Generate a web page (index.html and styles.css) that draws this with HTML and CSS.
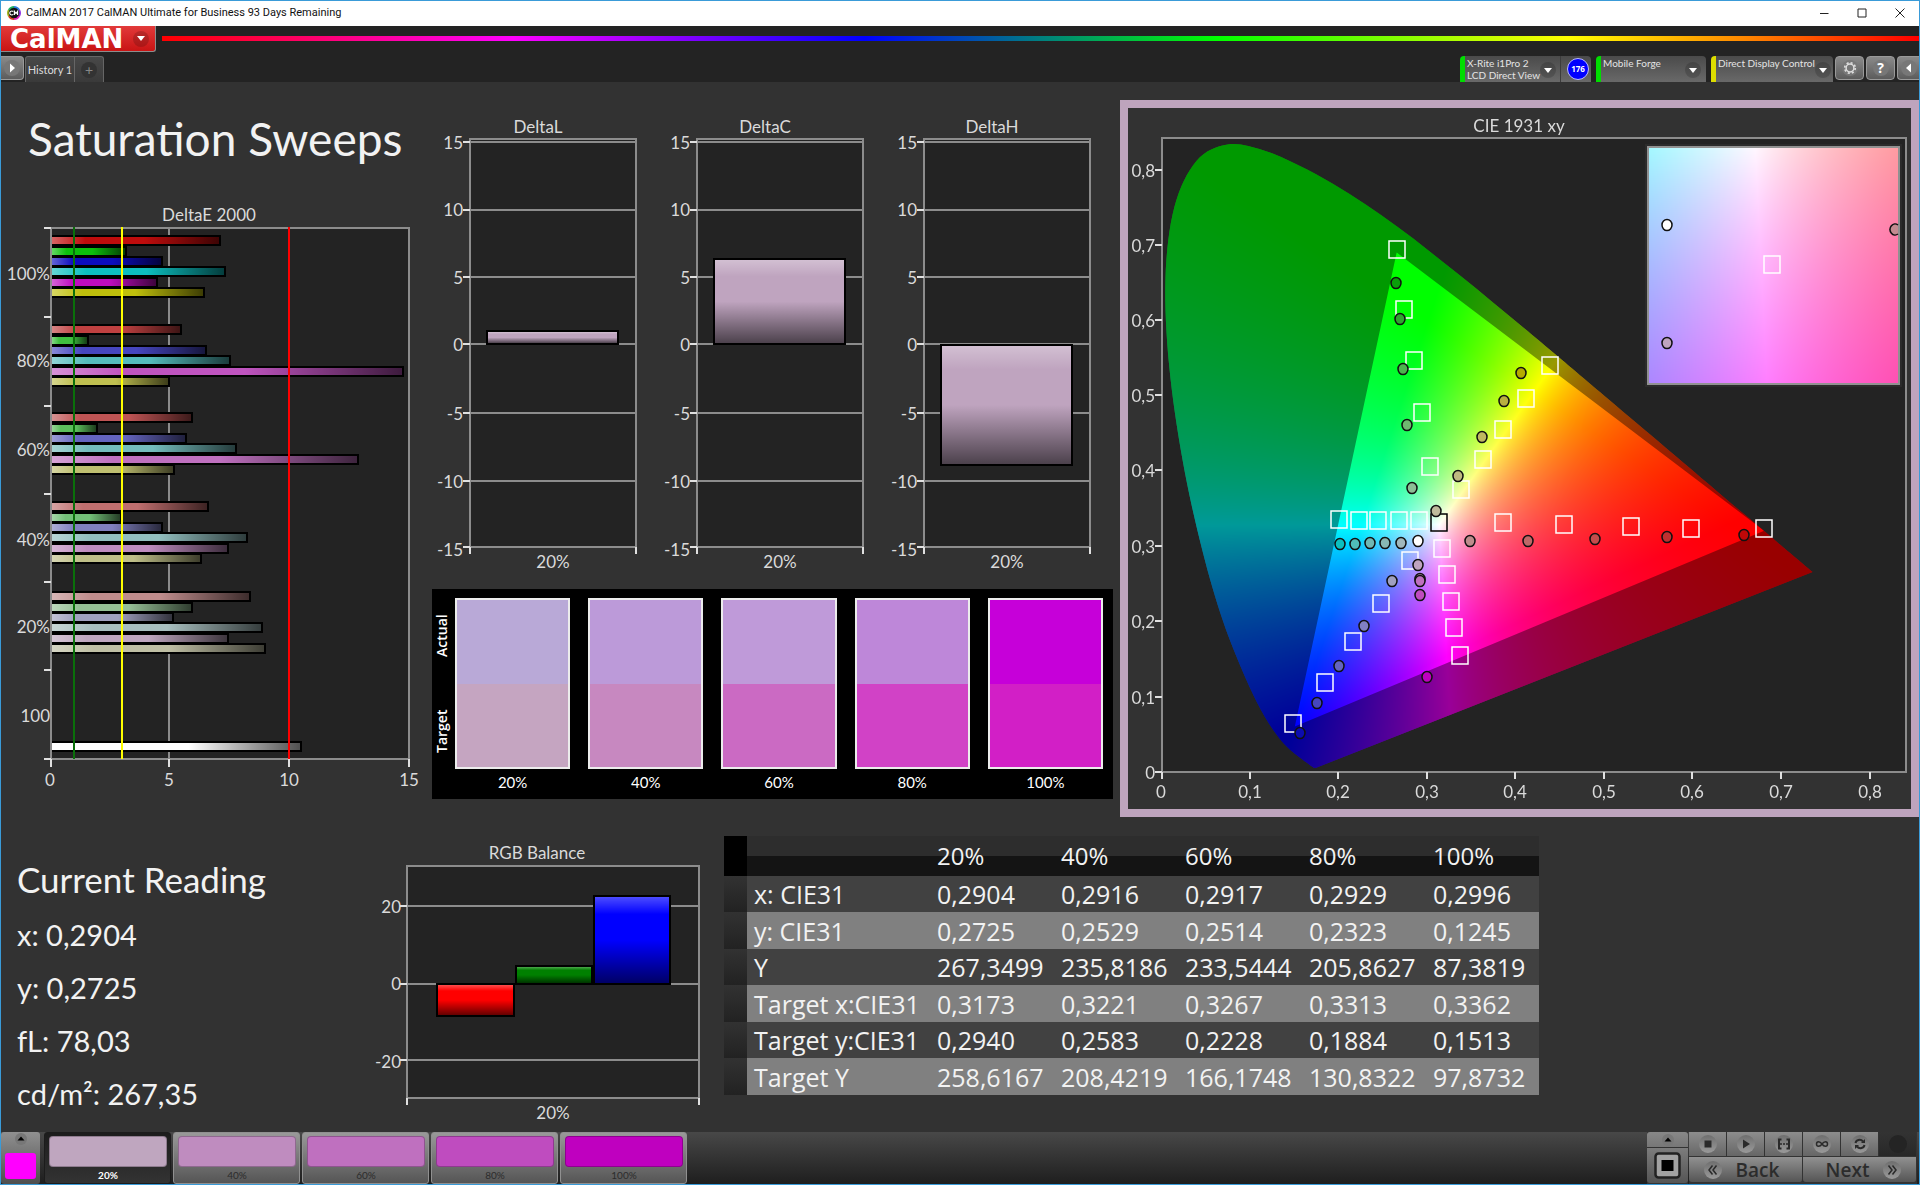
FILE: index.html
```html
<!DOCTYPE html>
<html lang="en">
<head>
<meta charset="utf-8">
<meta name="viewport" content="width=device-width, initial-scale=1">
<title>CalMAN 2017 CalMAN Ultimate for Business</title>
<link rel="stylesheet" href="styles.css">
</head>
<body>
<svg class="defs" width="0" height="0" aria-hidden="true">
  <defs>
    <linearGradient id="shade-x" x1="0" x2="1" y1="0" y2="0">
      <stop offset="0" stop-color="#fff" stop-opacity=".36"/>
      <stop offset=".2" stop-color="#fff" stop-opacity="0"/>
      <stop offset=".55" stop-color="#000" stop-opacity="0"/>
      <stop offset="1" stop-color="#000" stop-opacity=".68"/>
    </linearGradient>
    <linearGradient id="shade-y" x1="0" x2="0" y1="0" y2="1">
      <stop offset="0" stop-color="#fff" stop-opacity=".3"/>
      <stop offset=".2" stop-color="#fff" stop-opacity="0"/>
      <stop offset=".5" stop-color="#000" stop-opacity="0"/>
      <stop offset="1" stop-color="#000" stop-opacity=".6"/>
    </linearGradient>
  </defs>
</svg>

<header class="titlebar">
  <svg class="app-icon" viewBox="0 0 14 14" aria-hidden="true">
    <circle cx="7" cy="7" r="6" fill="#111"/>
    <g fill="none" stroke-width="1.6">
      <path d="M7 .9A6.1 6.1 0 0 1 12.3 4" stroke="#2b7de0"/>
      <path d="M12.3 4A6.1 6.1 0 0 1 12.3 10" stroke="#8a2be2"/>
      <path d="M12.3 10A6.1 6.1 0 0 1 7 13.1" stroke="#e020c0"/>
      <path d="M7 13.1A6.1 6.1 0 0 1 1.7 10" stroke="#d04020"/>
      <path d="M1.7 10A6.1 6.1 0 0 1 1.7 4" stroke="#a0b010"/>
      <path d="M1.7 4A6.1 6.1 0 0 1 7 .9" stroke="#20b060"/>
    </g>
    <path d="M6.2 5.6A2 2 0 1 0 6.2 8.4M7.4 9V5.4L9 7.6L10.6 5.4V9" fill="none" stroke="#fff" stroke-width="1.2"/>
  </svg>
  <span class="window-title">CalMAN 2017 CalMAN Ultimate for Business 93 Days Remaining</span>
  <div class="window-buttons">
    <button type="button" aria-label="Minimize"><svg viewBox="0 0 10 10"><path d="M1 5.5H9.5"/></svg></button>
    <button type="button" aria-label="Maximize"><svg viewBox="0 0 10 10"><path d="M1 1H9V9H1Z"/></svg></button>
    <button type="button" aria-label="Close"><svg viewBox="0 0 10 10"><path d="M.5 .5L9.5 9.5M9.5 .5L.5 9.5"/></svg></button>
  </div>
</header>

<div class="brandbar">
  <button type="button" class="logo">CalMAN<span class="caret"></span></button>
  <div class="spectrum"></div>
</div>

<nav class="toolbar">
  <button type="button" class="square-button first" aria-label="Expand"><span class="disc"><svg viewBox="0 0 16 16"><path d="M6 3.500L11 8L6 12.500Z"/></svg></span></button>
  <div class="tabs">
    <button type="button" class="tab">History 1</button>
    <button type="button" class="tab add" aria-label="Add history"><span>+</span></button>
  </div>
  <div class="devices">
    <div class="device meter">
      <button type="button" class="device-menu">X-Rite i1Pro 2<br>LCD Direct View<span class="caret"></span></button>
      <span class="badge">176</span>
    </div>
    <button type="button" class="device device-menu source">Mobile Forge<span class="caret"></span></button>
    <button type="button" class="device device-menu display">Direct Display Control<span class="caret"></span></button>
    <button type="button" class="square-button" aria-label="Settings"><span class="disc"><svg viewBox="0 0 16 16"><circle cx="8" cy="8" r="3.900" fill="none" stroke="#ddd" stroke-width="1.500"/><circle cx="8" cy="8" r="5.300" fill="none" stroke="#ddd" stroke-width="1.600" stroke-dasharray="2.080 2.080"/></svg></span></button>
    <button type="button" class="square-button help" aria-label="Help"><span class="disc">?</span></button>
    <button type="button" class="square-button last" aria-label="Collapse"><span class="disc"><svg viewBox="0 0 16 16"><path d="M10 3.500L5 8L10 12.500Z"/></svg></span></button>
  </div>
</nav>

<main>
  <section class="upper">
    <div class="sweeps">
      <h1>Saturation Sweeps</h1>
      <svg class="chart" viewBox="1 200 431 600" role="img" aria-label="DeltaE 2000">
        <text class="label" x="209" y="221" text-anchor="middle">DeltaE 2000</text>
        <rect class="plot" x="51" y="228" width="358" height="531"/>
        <path class="grid" d="M169 228V759M289 228V759"/>
        <g id="delta-e-bars"></g>
        <path class="frame" d="M51 228H409V759H51Z"/>
        <path class="tick" d="M44 228H51M44 317H51M44 406H51M44 494H51M44 582H51M44 670H51M44 759H51M51 759V767M169 759V767M289 759V767M409 759V767"/>
        <path d="M74 227V759" stroke="#0a700a" stroke-width="2"/>
        <path d="M122 227V759" stroke="#ff0" stroke-width="2"/>
        <path d="M289 227V759" stroke="#f00" stroke-width="2"/>
        <g class="label" text-anchor="end">
          <text x="50" y="280">100%</text><text x="50" y="367">80%</text><text x="50" y="456">60%</text>
          <text x="50" y="546">40%</text><text x="50" y="633">20%</text><text x="50" y="722">100</text>
        </g>
        <g class="label" text-anchor="middle">
          <text x="50" y="786">0</text><text x="169" y="786">5</text><text x="289" y="786">10</text><text x="409" y="786">15</text>
        </g>
      </svg>
    </div>

    <div class="deltas">
      <div class="delta-charts">
        <svg class="chart" viewBox="0 110 227 470" role="img" aria-label="DeltaL">
          <text class="label" x="106" y="133" text-anchor="middle">DeltaL</text>
          <rect class="plot" x="38" y="139" width="166" height="408"/>
          <path class="grid" d="M38 142H204M38 210H204M38 277H204M38 344H204M38 413H204M38 481H204"/>
          <path class="frame" d="M38 139H204V547H38Z"/>
          <path class="tick" d="M31 142H38M31 210H38M31 277H38M31 344H38M31 413H38M31 481H38M31 547H38M38 547V554M204 547V554"/>
          <rect class="bar" x="55" y="331" width="131" height="13" fill="#bfa4bf"/>
          <rect x="56" y="332" width="129" height="11" fill="url(#shade-y)"/>
          <g class="label" text-anchor="end">
            <text x="31" y="149">15</text><text x="31" y="216">10</text><text x="31" y="284">5</text><text x="31" y="351">0</text>
            <text x="31" y="420">-5</text><text x="31" y="488">-10</text><text x="31" y="556">-15</text>
          </g>
          <text class="label" x="121" y="568" text-anchor="middle">20%</text>
        </svg>
        <svg class="chart" viewBox="0 110 227 470" role="img" aria-label="DeltaC">
          <text class="label" x="106" y="133" text-anchor="middle">DeltaC</text>
          <rect class="plot" x="38" y="139" width="166" height="408"/>
          <path class="grid" d="M38 142H204M38 210H204M38 277H204M38 344H204M38 413H204M38 481H204"/>
          <path class="frame" d="M38 139H204V547H38Z"/>
          <path class="tick" d="M31 142H38M31 210H38M31 277H38M31 344H38M31 413H38M31 481H38M31 547H38M38 547V554M204 547V554"/>
          <rect class="bar" x="55" y="259" width="131" height="85" fill="#bfa4bf"/>
          <rect x="56" y="260" width="129" height="83" fill="url(#shade-y)"/>
          <g class="label" text-anchor="end">
            <text x="31" y="149">15</text><text x="31" y="216">10</text><text x="31" y="284">5</text><text x="31" y="351">0</text>
            <text x="31" y="420">-5</text><text x="31" y="488">-10</text><text x="31" y="556">-15</text>
          </g>
          <text class="label" x="121" y="568" text-anchor="middle">20%</text>
        </svg>
        <svg class="chart" viewBox="0 110 227 470" role="img" aria-label="DeltaH">
          <text class="label" x="106" y="133" text-anchor="middle">DeltaH</text>
          <rect class="plot" x="38" y="139" width="166" height="408"/>
          <path class="grid" d="M38 142H204M38 210H204M38 277H204M38 344H204M38 413H204M38 481H204"/>
          <path class="frame" d="M38 139H204V547H38Z"/>
          <path class="tick" d="M31 142H38M31 210H38M31 277H38M31 344H38M31 413H38M31 481H38M31 547H38M38 547V554M204 547V554"/>
          <rect class="bar" x="55" y="345" width="131" height="120" fill="#bfa4bf"/>
          <rect x="56" y="346" width="129" height="118" fill="url(#shade-y)"/>
          <g class="label" text-anchor="end">
            <text x="31" y="149">15</text><text x="31" y="216">10</text><text x="31" y="284">5</text><text x="31" y="351">0</text>
            <text x="31" y="420">-5</text><text x="31" y="488">-10</text><text x="31" y="556">-15</text>
          </g>
          <text class="label" x="121" y="568" text-anchor="middle">20%</text>
        </svg>
      </div>
      <div class="compare">
        <div class="compare-side"><span>Actual</span><span>Target</span></div>
        <div class="pair p20"><div class="chip"><i></i><b></b></div>20%</div>
        <div class="pair p40"><div class="chip"><i></i><b></b></div>40%</div>
        <div class="pair p60"><div class="chip"><i></i><b></b></div>60%</div>
        <div class="pair p80"><div class="chip"><i></i><b></b></div>80%</div>
        <div class="pair p100"><div class="chip"><i></i><b></b></div>100%</div>
      </div>
    </div>

    <div class="cie">
      <canvas id="cie-canvas" width="783" height="701"></canvas>
      <svg class="chart" viewBox="1128 108 783 701" role="img" aria-label="CIE 1931 xy">
        <text class="label" x="1519" y="132" text-anchor="middle">CIE 1931 xy</text>
        <path class="frame" d="M1162 138H1906V772H1162Z"/>
        <rect x="1648" y="147" width="251" height="237" fill="none" stroke="#919191" stroke-width="2"/>
        <path class="tick" d="M1155 170H1162M1155 245H1162M1155 320H1162M1155 395H1162M1155 470H1162M1155 546H1162M1155 621H1162M1155 697H1162M1155 772H1162M1162 772V779M1250 772V779M1338 772V779M1427 772V779M1515 772V779M1604 772V779M1692 772V779M1781 772V779M1870 772V779"/>
        <g class="label" text-anchor="end">
          <text x="1155" y="177">0,8</text><text x="1155" y="252">0,7</text><text x="1155" y="327">0,6</text><text x="1155" y="402">0,5</text>
          <text x="1155" y="477">0,4</text><text x="1155" y="553">0,3</text><text x="1155" y="628">0,2</text><text x="1155" y="704">0,1</text><text x="1155" y="779">0</text>
        </g>
        <g class="label" text-anchor="middle">
          <text x="1161" y="798">0</text><text x="1250" y="798">0,1</text><text x="1338" y="798">0,2</text><text x="1427" y="798">0,3</text>
          <text x="1515" y="798">0,4</text><text x="1604" y="798">0,5</text><text x="1692" y="798">0,6</text><text x="1781" y="798">0,7</text><text x="1870" y="798">0,8</text>
        </g>
        <g id="cie-targets" class="targets"></g>
        <g id="cie-readings" class="readings"></g>
      </svg>
    </div>
  </section>

  <section class="lower">
    <div class="reading">
      <h2>Current Reading</h2>
      <p>x: 0,2904</p>
      <p>y: 0,2725</p>
      <p>fL: 78,03</p>
      <p>cd/m²: 267,35</p>
    </div>
    <svg class="chart rgb" viewBox="372 838 352 290" role="img" aria-label="RGB Balance">
      <text class="label" x="537" y="859" text-anchor="middle">RGB Balance</text>
      <rect class="plot" x="407" y="866" width="292" height="232"/>
      <path class="grid" d="M407 906H699M407 984H699M407 1060H699"/>
      <path class="frame" d="M407 866H699V1098H407Z"/>
      <path class="tick" d="M400 906H407M400 984H407M400 1060H407M407 1098V1105M699 1098V1105"/>
      <rect class="bar" x="437" y="984" width="77" height="32" fill="#f00"/><rect x="438" y="985" width="75" height="30" fill="url(#shade-y)"/>
      <rect class="bar" x="516" y="966" width="76" height="18" fill="#008000"/><rect x="517" y="967" width="74" height="16" fill="url(#shade-y)"/>
      <rect class="bar" x="594" y="896" width="76" height="88" fill="#00f"/><rect x="595" y="897" width="74" height="86" fill="url(#shade-y)"/>
      <g class="label" text-anchor="end"><text x="401" y="913">20</text><text x="401" y="990">0</text><text x="401" y="1068">-20</text></g>
      <text class="label" x="553" y="1119" text-anchor="middle">20%</text>
    </svg>
    <table>
      <colgroup><col class="c-gutter"><col class="c-name"><col class="c-val"><col class="c-val"><col class="c-val"><col class="c-val"><col></colgroup>
      <thead><tr><td></td><td></td><th scope="col">20%</th><th scope="col">40%</th><th scope="col">60%</th><th scope="col">80%</th><th scope="col">100%</th></tr></thead>
      <tbody>
        <tr><td></td><th scope="row">x: CIE31</th><td>0,2904</td><td>0,2916</td><td>0,2917</td><td>0,2929</td><td>0,2996</td></tr>
        <tr><td></td><th scope="row">y: CIE31</th><td>0,2725</td><td>0,2529</td><td>0,2514</td><td>0,2323</td><td>0,1245</td></tr>
        <tr><td></td><th scope="row">Y</th><td>267,3499</td><td>235,8186</td><td>233,5444</td><td>205,8627</td><td>87,3819</td></tr>
        <tr><td></td><th scope="row">Target x:CIE31</th><td>0,3173</td><td>0,3221</td><td>0,3267</td><td>0,3313</td><td>0,3362</td></tr>
        <tr><td></td><th scope="row">Target y:CIE31</th><td>0,2940</td><td>0,2583</td><td>0,2228</td><td>0,1884</td><td>0,1513</td></tr>
        <tr><td></td><th scope="row">Target Y</th><td>258,6167</td><td>208,4219</td><td>166,1748</td><td>130,8322</td><td>97,8732</td></tr>
      </tbody>
    </table>
  </section>
</main>

<footer>
  <button type="button" class="pattern" aria-label="Pattern color">
    <svg viewBox="0 0 12 12"><circle cx="6" cy="6" r="6"/><path d="M2.500 7.500L6 3.500L9.500 7.500Z"/></svg><i></i>
  </button>
  <div class="steps">
    <button type="button" class="step s20 active"><i></i>20%</button>
    <button type="button" class="step s40"><i></i>40%</button>
    <button type="button" class="step s60"><i></i>60%</button>
    <button type="button" class="step s80"><i></i>80%</button>
    <button type="button" class="step s100"><i></i>100%</button>
  </div>
  <div class="controls">
    <div class="target-box">
      <button type="button" class="target-menu" aria-label="Window menu"><svg viewBox="0 0 12 12"><circle cx="6" cy="6" r="6"/><path d="M2.500 7.500L6 3.500L9.500 7.500Z"/></svg></button>
      <button type="button" class="target-size" aria-label="Window size"><svg viewBox="0 0 27 27"><rect x="1.500" y="1.500" width="24" height="24" rx="3" fill="#a2a2a2" stroke="#222" stroke-width="2.500"/><rect x="7.500" y="8" width="12" height="11" fill="#000"/></svg></button>
    </div>
    <div class="transport">
      <button type="button" aria-label="Stop"><span class="knob"><svg viewBox="0 0 18 18"><path d="M5.500 5.500H12.500V12.500H5.500Z"/></svg></span></button>
      <button type="button" aria-label="Play"><span class="knob"><svg viewBox="0 0 18 18"><path d="M6 4.500L13 9L6 13.500Z"/></svg></span></button>
      <button type="button" aria-label="Read series"><span class="knob"><svg viewBox="0 0 18 18"><path d="M6.500 4.500H4V13.500H6.500M11.500 4.500H14V13.500H11.500" class="line heavy"/><path d="M5 9H7M8 9H10M11 9H13" class="line"/></svg></span></button>
      <button type="button" aria-label="Read continuous"><span class="knob"><svg viewBox="0 0 18 18"><path d="M9 9C7 6 3.500 6 3.500 9S7 12 9 9S14.500 6 14.500 9S11 12 9 9Z" class="line"/></svg></span></button>
      <button type="button" aria-label="Refresh"><span class="knob"><svg viewBox="0 0 18 18"><path d="M4.500 8C5 5 9.500 3.500 12 6.500M13.500 10C13 13 8.500 14.500 6 11.500" class="line heavy"/><path d="M14 4V8H10ZM4 14V10H8Z"/></svg></span></button>
      <button type="button" class="off" aria-label="Unavailable" disabled><span class="knob"></span></button>
      <button type="button" class="wide back"><span class="knob"><svg viewBox="0 0 18 18"><path d="M8.500 4.500L5 9L8.500 13.500M12.500 4.500L9 9L12.500 13.500" class="line"/></svg></span>Back</button>
      <button type="button" class="wide next">Next<span class="knob"><svg viewBox="0 0 18 18"><path d="M5.500 4.500L9 9L5.500 13.500M9.500 4.500L13 9L9.500 13.500" class="line"/></svg></span></button>
    </div>
  </div>
</footer>
<script src="charts.js"></script>
</body>
</html>
```
FILE: styles.css
```css
* { box-sizing: border-box; }

body {
  margin: 0;
  min-height: 100vh;
  display: flex;
  flex-direction: column;
  border: 1px solid #3a9bd8;
  background: #323232;
  color: #f2f2f2;
  font-family: "Open Sans", "Noto Sans", sans-serif;
}

button {
  margin: 0;
  padding: 0;
  border: 0;
  background: none;
  color: inherit;
  font: inherit;
}

.defs { position: absolute; }

/* Window title */
.titlebar {
  display: flex;
  align-items: center;
  height: 25px;
  padding: 0 0 2px 6px;
  background: #fff;
  color: #111;
  font: 11px/16px Roboto, "Open Sans", sans-serif;
}
.app-icon { width: 14px; height: 14px; }
.window-title { margin-left: 5px; }
.window-buttons { display: flex; margin-left: auto; }
.window-buttons button { display: grid; place-items: center; width: 38px; height: 23px; }
.window-buttons svg { width: 10px; height: 10px; fill: none; stroke: #222; stroke-width: 1; }

/* Brand row */
.brandbar {
  display: flex;
  align-items: center;
  gap: 6px;
  height: 27px;
  background: #232323;
}
.logo {
  display: flex;
  align-items: center;
  justify-content: space-between;
  align-self: flex-start;
  width: 155px;
  height: 26px;
  padding: 0 6px 0 9px;
  border: solid #8d8d8d;
  border-width: 0 1px 1px 0;
  border-radius: 0 0 3px 0;
  background: linear-gradient(#e23a3a, #c91414);
  color: #fff;
  font: bold 26px/24px "DejaVu Sans", sans-serif;
}
.spectrum {
  flex: 1;
  height: 5px;
  margin-bottom: 2px;
  background: linear-gradient(90deg, #f00, #f0f 20%, #00f 40%, #0f0 60%, #ff0 80%, #f80 90%, #f00);
}
.caret {
  display: grid;
  place-items: center;
  flex: none;
  width: 16px;
  height: 16px;
  border-radius: 50%;
  background: rgba(0, 0, 0, .16);
}
.caret::before {
  content: "";
  border: 4px solid transparent;
  border-top: 5px solid #fff;
  border-bottom: 0;
}

/* Tabs and devices */
.toolbar {
  display: flex;
  height: 29px;
  padding-top: 3px;
  background: #232323;
  color: #e4e4e4;
  font-family: Lato, "Open Sans", sans-serif;
  font-size: 11px;
}
.square-button {
  display: grid;
  place-items: center;
  width: 29px;
  height: 24px;
  border: 1px solid #9a9a9a;
  border-radius: 4px;
  background: linear-gradient(#8a8a8a, #5c5c5c);
}
.square-button.first { width: 23px; border-left: 0; border-radius: 0 4px 4px 0; }
.square-button.last { width: 22px; border-right: 0; border-radius: 4px 0 0 4px; }
.disc {
  display: grid;
  place-items: center;
  width: 16px;
  height: 16px;
  border-radius: 50%;
  background: #777;
  color: #fff;
  font: bold 14px/16px "Open Sans", sans-serif;
}
.disc svg { width: 16px; height: 16px; fill: #fff; }
.tabs { display: flex; margin-left: 1px; }
.tab {
  width: 50px;
  height: 26px;
  border: solid #666;
  border-width: 1px 1px 0;
  border-radius: 3px 0 0 0;
  background: linear-gradient(#484848, #3a3a3a);
  color: #ddd;
}
.tab.add { width: 29px; border-left: 0; border-radius: 0 3px 0 0; color: #888; }
.tab.add span { display: block; width: 16px; margin: 0 auto; border-radius: 50%; background: #333; line-height: 16px; font-size: 14px; }
.devices { display: flex; gap: 2px; margin-left: auto; }
.device {
  display: flex;
  height: 26px;
  margin-right: 3px;
  border-left: 5px solid #0d0;
  border-radius: 4px 4px 0 0;
  background: linear-gradient(#4a4a4a, #696969);
}
.device-menu {
  display: flex;
  justify-content: space-between;
  align-items: flex-start;
  padding: 1px 5px 0 2px;
  font-size: 10px;
  line-height: 12px;
  text-align: left;
  white-space: nowrap;
}
.device-menu .caret { margin-top: 5px; }
.meter { width: 131px; }
.meter .device-menu { width: 96px; padding-right: 8px; border-right: 1px solid #3c3c3c; }
.source { width: 110px; }
.display { width: 122px; margin-right: 0; border-left-color: #dd0; }
.badge {
  width: 22px;
  height: 22px;
  margin: 2px 0 0 6px;
  border: 1px solid #bbf;
  border-radius: 50%;
  background: #00f;
  color: #fff;
  font: bold 8px/20px "Open Sans", sans-serif;
  text-align: center;
}

/* Charts */
main { flex: 1; }
.chart { display: block; width: 100%; height: auto; }
.label { fill: #dadada; font-family: Lato, "Open Sans", sans-serif; font-size: 17px; }
.plot { fill: #232323; }
.grid, .frame { fill: none; stroke: #8c8c8c; stroke-width: 2; }
.tick { fill: none; stroke: #e0e0e0; stroke-width: 2; }
.bar { stroke: #000; stroke-width: 2; }

.upper { display: grid; grid-template-columns: 431fr 688fr 799fr; align-items: start; }
h1, h2, p { margin: 0; font-family: Lato, "Open Sans", sans-serif; font-weight: 400; white-space: nowrap; }
h1 { padding: 22px 0 26px 27px; font-size: 46px; line-height: 70px; }

.deltas { padding: 28px 7px 0 0; }
.delta-charts { display: grid; grid-template-columns: repeat(3, 1fr); }
.compare {
  display: grid;
  grid-template-columns: 5px repeat(5, 1fr);
  column-gap: 18px;
  height: 210px;
  margin-top: 9px;
  padding: 9px 10px 0 0;
  background: #000;
  color: #fff;
  font: 15px/26px Lato, "Open Sans", sans-serif;
  text-align: center;
}
.compare-side { display: flex; flex-direction: column; gap: 19px; width: 20px; height: 171px; font: 600 14px/20px "Open Sans", sans-serif; }
.compare-side span { flex: 1; writing-mode: vertical-rl; transform: rotate(180deg); text-align: center; }
.chip { display: grid; grid-template-rows: 1fr 1fr; height: 171px; border: 2px solid #ececec; }
.p20 i { background: #b9a9d7; } .p20 b { background: #c5a5c1; }
.p40 i { background: #bc9ad9; } .p40 b { background: #c788c0; }
.p60 i { background: #bf9ad9; } .p60 b { background: #cb6ac3; }
.p80 i { background: #be87d9; } .p80 b { background: #d142c6; }
.p100 i { background: #c600d9; } .p100 b { background: #d21fc6; }

.cie { display: grid; margin-top: 18px; border: 8px solid #bea4bd; }
.cie > * { grid-area: 1 / 1; width: 100%; height: auto; }
.targets rect { fill: none; stroke: #fff; stroke-width: 1.500; }
.targets .white-point { stroke: #000; }
.readings ellipse { stroke: #111; stroke-width: 1.500; }

/* Readings and table */
.lower { display: grid; grid-template-columns: 371fr 352fr 815fr 380fr; align-items: start; }
.reading { padding: 33px 0 0 16px; font-size: 29px; line-height: 53px; }
h2 { font-size: 35px; line-height: 58px; }
.rgb { margin-top: 21px; }
table { width: 100%; margin-top: 19px; border-collapse: collapse; table-layout: fixed; font-size: 25px; line-height: 30px; }
.c-gutter { width: 23px; } .c-name { width: 183px; } .c-val { width: 124px; }
th, td { height: 36px; padding: 0 0 0 7px; font-weight: 400; text-align: left; white-space: nowrap; }
thead th, thead td { height: 40px; background: linear-gradient(#2d2d2d 50%, #141414 50%); font-size: 24px; }
thead td:first-child { background: #000; }
tbody tr { background: #414141; }
tbody tr:nth-child(even) { background: #808080; }
tbody tr:nth-child(even) > * { height: 37px; }
tbody td:first-child { background: linear-gradient(#323232, #222); }

/* Bottom bar */
footer {
  display: flex;
  height: 52px;
  background: linear-gradient(#484848, #1e1e1e);
  color: #2c2c2c;
}
footer svg { display: block; }
.pattern {
  width: 39px;
  padding: 1px 4px 5px;
  border-radius: 3px;
  background: linear-gradient(#909090, #4e4e4e);
}
.pattern svg { width: 12px; margin: 0 auto; }
.pattern i { display: block; height: 26px; margin-top: 8px; border-radius: 3px; background: #f0f; }
.pattern circle, .target-menu circle { fill: #777; }
.steps { display: flex; gap: 2px; margin-left: 4px; }
.step {
  width: 127px;
  padding: 3px 3px 1px 4px;
  border: 1px solid #909090;
  border-radius: 3px;
  background: linear-gradient(#999, #555);
  font: 10px/14px Lato, "Open Sans", sans-serif;
}
.step i { display: block; height: 31px; margin-bottom: 1px; border: 1px solid rgba(0, 0, 0, .25); border-radius: 4px; }
.step.active { border-color: #1c1c1c; background: linear-gradient(#1c1c1c, #333); color: #fff; font-weight: 700; }
.s20 i { background: #bfa6bf; } .s40 i { background: #bf8cbf; } .s60 i { background: #bf70bf; }
.s80 i { background: #bf4cbf; } .s100 i { background: #bf00bf; }

.controls { display: flex; gap: 1px; margin-left: auto; padding-right: 2px; }
.target-box { display: grid; grid-template-rows: 15px 1fr; gap: 1px; width: 41px; padding-bottom: 1px; background: #333; }
.target-box button { display: grid; place-items: center; border-radius: 3px 3px 0 0; background: linear-gradient(#888, #777); }
.target-box .target-size { border-radius: 0 0 3px 3px; background: linear-gradient(#7c7c7c, #555); }
.target-menu svg { width: 12px; }
.target-size svg { width: 27px; }
.transport {
  display: grid;
  grid-template-columns: repeat(6, 38px);
  grid-template-rows: 24px 25px;
  row-gap: 1px;
  padding-bottom: 2px;
  background: #333;
}
.transport button {
  display: flex;
  align-items: center;
  justify-content: center;
  border-right: 1px solid #333;
  background: linear-gradient(#8d8d8d, #666);
}
.transport .off { background: linear-gradient(#333, #282828); }
.transport .off .knob { background: #242424; }
.transport .wide {
  grid-column: span 3;
  gap: 14px;
  border-radius: 0 0 3px 3px;
  background: linear-gradient(#919191, #555);
  font-size: 19px;
  font-weight: 600;
  line-height: 24px;
}
.transport .back { padding-right: 8px; }
.transport .next { padding-left: 8px; }
.knob { width: 18px; height: 18px; border-radius: 50%; background: linear-gradient(#6e6e6e, #9a9a9a); }
.knob svg { width: 18px; fill: #2a2a2a; }
.knob .line { fill: none; stroke: #2a2a2a; stroke-width: 1.500; }
.knob .heavy { stroke-width: 2; }
```
FILE: charts.js
```js
const SVG = "http://www.w3.org/2000/svg";

function add(parent, name, attrs) {
  const node = document.createElementNS(SVG, name);
  for (const key in attrs) node.setAttribute(key, attrs[key]);
  parent.appendChild(node);
}

/* DeltaE 2000: one row of bars per saturation level, [colour, end x] */
const groups = [
  [236, ["#bf0c0c", 220], ["#0cbf0c", 126], ["#0c0cbf", 162], ["#0cbfbf", 225], ["#bf0cbf", 157], ["#bfbf0c", 204]],
  [325, ["#bf4040", 181], ["#40bf40", 88], ["#4646bf", 206], ["#54bcbc", 230], ["#bf54bf", 403], ["#bfbf50", 169]],
  [413, ["#bf5454", 192], ["#5cbf5c", 97], ["#6464bf", 186], ["#74bcbc", 236], ["#bf70bf", 358], ["#bfbf70", 174]],
  [502, ["#bf6e6e", 208], ["#73bf78", 121], ["#8080bf", 162], ["#92bfbf", 247], ["#bf8cbf", 228], ["#bfbf88", 201]],
  [592, ["#bf8c8c", 250], ["#95bf95", 192], ["#a0a0bf", 173], ["#a8bfbf", 262], ["#bfa6bf", 228], ["#bfbfa4", 265]],
  [742, ["#ffffff", 301]]
];
const rowOffsets = [0, 11, 21, 31, 42, 52];
const barLayer = document.getElementById("delta-e-bars");
for (const [top, ...bars] of groups) {
  bars.forEach(([color, end], i) => {
    const y = top + rowOffsets[i];
    add(barLayer, "rect", { x: 51, y: y, width: end - 51, height: 9, fill: color, class: "bar" });
    add(barLayer, "rect", { x: 52, y: y + 1, width: end - 53, height: 7, fill: "url(#shade-x)" });
  });
}

/* CIE 1931 chart geometry */
const X0 = 1162, Y0 = 771.5, KX = 885.5, KY = 752, LEFT = 1128, TOP = 108;
const px = x => X0 + x * KX - LEFT;
const py = y => Y0 - y * KY - TOP;
const locus = [
  [.1741, .005], [.1714, .0051], [.1689, .0069], [.1644, .0109], [.1566, .0177], [.144, .0297], [.1355, .0399], [.1241, .0578],
  [.1096, .0868], [.0913, .1327], [.0687, .2007], [.0454, .295], [.0235, .4127], [.0082, .5384], [.0039, .6548],
  [.0139, .7502], [.0389, .812], [.0743, .8338], [.1142, .8262], [.1547, .8059], [.1929, .7816], [.2296, .7543],
  [.2658, .7243], [.3016, .6923], [.3373, .6589], [.3731, .6245], [.4087, .5896], [.4441, .5547], [.5125, .4866],
  [.5752, .4242], [.627, .3725], [.6658, .334], [.6915, .3083], [.7079, .292], [.7347, .2653]
];

function colorAt(x, y) {
  const X = x / y, Z = (1 - x - y) / y;
  const rgb = [
    3.2406 * X - 1.5372 - .4986 * Z,
    -.9689 * X + 1.8758 + .0415 * Z,
    .0557 * X - .204 + 1.057 * Z
  ].map(v => Math.max(0, v));
  const top = Math.max(...rgb);
  return rgb.map(v => 255 * v / top);
}

function fieldCanvas(w, h, toXY) {
  const canvas = document.createElement("canvas");
  canvas.width = w;
  canvas.height = h;
  const ctx = canvas.getContext("2d");
  const data = ctx.createImageData(w, h);
  for (let j = 0; j < h; j++) {
    for (let i = 0; i < w; i++) {
      const [x, y] = toXY(i, j);
      const c = colorAt(x, Math.max(y, .001));
      const k = 4 * (j * w + i);
      data.data[k] = c[0];
      data.data[k + 1] = c[1];
      data.data[k + 2] = c[2];
      data.data[k + 3] = 255;
    }
  }
  ctx.putImageData(data, 0, 0);
  return canvas;
}

const canvas = document.getElementById("cie-canvas");
const ctx = canvas.getContext("2d");
ctx.fillStyle = "#232323";
ctx.fillRect(1162 - LEFT, 138 - TOP, 744, 634);

const shape = new Path2D();
shape.moveTo(px(locus[0][0]), py(locus[0][1]));
for (let i = 0; i < locus.length - 1; i++) {
  const a = locus[Math.max(i - 1, 0)], b = locus[i], c = locus[i + 1], d = locus[Math.min(i + 2, locus.length - 1)];
  shape.bezierCurveTo(
    px(b[0] + (c[0] - a[0]) / 6), py(b[1] + (c[1] - a[1]) / 6),
    px(c[0] - (d[0] - b[0]) / 6), py(c[1] - (d[1] - b[1]) / 6),
    px(c[0]), py(c[1])
  );
}
shape.closePath();

const outside = new Path2D();
outside.rect(0, 0, canvas.width, canvas.height);
[[.68, .32], [.265, .69], [.15, .06]].forEach(([x, y], i) => i ? outside.lineTo(px(x), py(y)) : outside.moveTo(px(x), py(y)));
outside.closePath();

ctx.save();
ctx.clip(shape);
ctx.drawImage(fieldCanvas(canvas.width, canvas.height, (i, j) => [(i + LEFT - X0) / KX, (Y0 - j - TOP) / KY]), 0, 0);
ctx.fillStyle = "rgba(0, 0, 0, .4)";
ctx.fill(outside, "evenodd");
ctx.restore();

/* Magnified view around the selected target */
ctx.fillStyle = "#2b2b2b";
ctx.fillRect(1645 - LEFT, 144 - TOP, 257, 243);
ctx.drawImage(fieldCanvas(251, 237, (i, j) => [.2855 + i / 3903, .3258 - j / 3674]), 1648 - LEFT, 147 - TOP);

const targets = [
  [1397, 250], [1404, 310], [1414, 361], [1422, 413], [1430, 467],
  [1550, 366], [1526, 399], [1503, 430], [1483, 460], [1461, 490],
  [1339, 520], [1359, 521], [1378, 521], [1399, 521], [1419, 521],
  [1503, 523], [1564, 525], [1631, 527], [1691, 529], [1764, 529],
  [1442, 549], [1447, 575], [1451, 602], [1454, 628], [1460, 656],
  [1410, 561], [1381, 604], [1353, 642], [1325, 683], [1293, 724],
  [1772, 265], [1439, 523, "white-point"]
];
const targetLayer = document.getElementById("cie-targets");
for (const [x, y, name] of targets) {
  add(targetLayer, "rect", { x: x - 8, y: y - 9, width: 16, height: 17, class: name || "target" });
}

const readings = [
  [1396, 283, "#0a9f0a"], [1400, 319, "#2fa52f"], [1403, 369, "#4db34d"], [1407, 425, "#70b870"], [1412, 488, "#8cbf95"],
  [1521, 373, "#b5ab00"], [1504, 401, "#b8b040"], [1482, 437, "#bfb860"], [1458, 476, "#bfb980"], [1436, 511, "#bfbb9c"],
  [1340, 544, "#0cbfbf"], [1355, 544, "#50bcb8"], [1370, 543, "#70b8b4"], [1385, 543, "#88b8b4"], [1401, 543, "#a0b8bc"],
  [1418, 541, "#ffffff"],
  [1470, 541, "#bf8c8c"], [1528, 541, "#bf6868"], [1595, 539, "#c44c4c"], [1667, 537, "#bf3030"], [1744, 535, "#bf0808"],
  [1418, 565, "#bfa4bf"], [1420, 579, "#bf8cbf"], [1420, 581, "#bf70bf"], [1420, 595, "#bf4cbf"], [1427, 677, "#bf00bf"],
  [1392, 581, "#a0a0bf"], [1364, 626, "#8080c4"], [1339, 666, "#6464bf"], [1317, 703, "#4646bf"], [1300, 733, "#0c0cb0"],
  [1667, 225, "#ffffff"], [1667, 343, "#bfa4bf"]
];
const readingLayer = document.getElementById("cie-readings");
for (const [x, y, fill] of readings) {
  add(readingLayer, "ellipse", { cx: x, cy: y, rx: 5, ry: 5.5, fill: fill });
}
add(readingLayer, "path", { d: "M1898 225A5 5.500 0 1 0 1898 234", fill: "#c48a90", stroke: "#111", "stroke-width": 1.5 });
```
